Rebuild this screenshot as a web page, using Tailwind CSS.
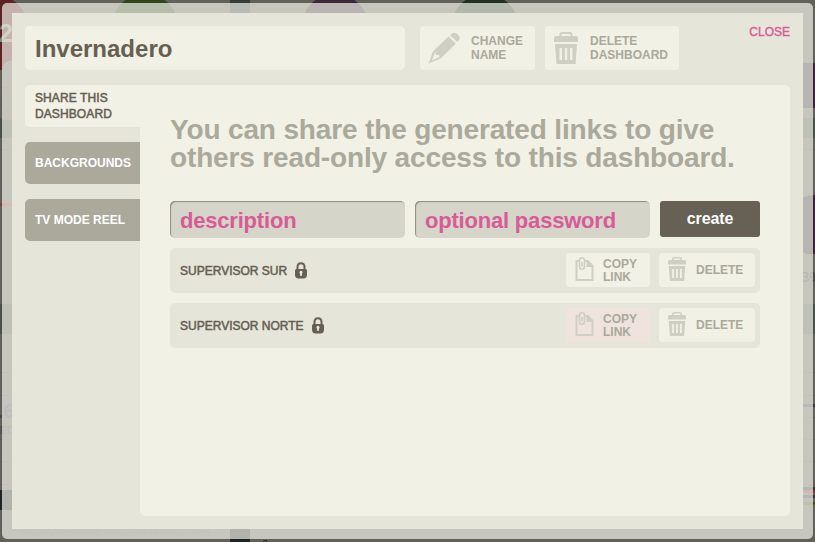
<!DOCTYPE html>
<html lang="en">
<head>
<meta charset="utf-8">
<title>Dashboard settings</title>
<script src="https://cdn.jsdelivr.net/npm/@tailwindcss/browser@4"></script>
</head>
<body class="relative w-[815px] h-[542px] overflow-hidden bg-[#61615a] font-['Liberation_Sans',Arial,sans-serif] text-[#666053]">
<svg class="absolute inset-0" width="815" height="542" aria-hidden="true">
  <g stroke="#595953" stroke-width="1">
    <path d="M0 105.500H815M0 149.500H815M0 372.500H815M0 395.500H815M0 417.500H815M0 439.500H815M0 461.500H815M0 484.500H815"/>
  </g>
  <rect y="118" width="815" height="20" fill="#4a504a"/>
  <rect y="304" width="815" height="30" fill="#4a504a"/>
  <rect y="490" width="240" height="20" fill="#1d2421"/>
  <rect x="230" y="525" width="20" height="17" fill="#1d2421"/>
  <rect x="230" y="0" width="20" height="13" fill="#363d39"/>
  <circle cx="-5" cy="28" r="33" fill="#5a2424"/>
  <rect x="0" y="30" width="13" height="40" fill="#5a2424"/>
  <path d="M2 120V68Q4 61 13 60V120Z" fill="#61615a"/>
  <circle cx="145" cy="28" r="34" fill="#30451f"/>
  <circle cx="335" cy="28" r="34" fill="#38283a"/>
  <circle cx="485" cy="28" r="34" fill="#213021"/>
  <rect x="785" y="63" width="30" height="45" fill="#38283a"/>
  <circle cx="815" cy="225" r="30" fill="#38283a"/>
  <rect x="785" y="254" width="30" height="50" fill="#61615a"/>
  <rect y="203" width="13" height="3" fill="#843f3a"/>
  <rect x="800" y="404" width="15" height="3" fill="#323b4a"/>
  <rect x="800" y="487" width="15" height="3" fill="#30382f"/>
  <rect x="800" y="490" width="15" height="3" fill="#7c3636"/>
  <rect x="800" y="495" width="15" height="3" fill="#38333d"/>
  <rect x="800" y="502" width="15" height="3" fill="#405024"/>
  <g font-weight="700">
    <text x="-1" y="42" font-size="25" fill="#8a8a82">2</text>
    <text x="-2" y="418" font-size="20" fill="#484855">.6</text>
    <text x="0" y="434" font-size="10" fill="#484855">ED</text>
  </g>
  <text x="0" y="95" font-size="10" fill="#7d4d49">TE</text>
  <text x="801" y="282" font-size="15" fill="#30302c">3%</text>
  <text x="20" y="534" font-size="10" textLength="190" fill="#4f5b56">PRESION ATMOSFERICA METEOROLOGIA</text>
  <text x="262" y="549" font-size="12" fill="#292c28">0</text>
</svg>
<svg class="hidden" aria-hidden="true">
  <symbol id="trash" viewBox="0 0 24 32">
    <path fill="none" stroke="currentColor" stroke-width="2" d="M6.500 5V2.500Q6.500 1 8 1H16Q17.500 1 17.500 2.500V5"/>
    <path fill="currentColor" d="M2 4H22Q24 4 24 6V10H0V6Q0 4 2 4Z"/>
    <path fill="currentColor" fill-rule="evenodd" d="M1 12H23L21.500 32H2.500ZM5.500 16V28H8V16ZM10.800 16V28H13.200V16ZM16 16V28H18.500V16Z"/>
  </symbol>
  <symbol id="clip" viewBox="0 0 18 24">
    <path fill="none" stroke="currentColor" stroke-width="2" d="M3.500 4H1V23H17V9L12 4H9.500"/>
    <path fill="currentColor" d="M11 3H12.500L18 8.500V10H11Z"/>
    <path fill="none" stroke="currentColor" stroke-width="1.600" d="M4 3.500V9.500Q4 12.200 6.500 12.200Q9 12.200 9 9.500V3.500Q9 .8 6.500 .8Q4 .8 4 3.500M6.500 5V9.500"/>
  </symbol>
  <symbol id="lock" viewBox="0 0 12 17">
    <path fill="none" stroke="currentColor" stroke-width="2" d="M2.500 8V5Q2.500 1.300 6 1.300Q9.500 1.300 9.500 5V8"/>
    <path fill="currentColor" fill-rule="evenodd" d="M1.500 7H10.500Q12 7 12 8.500V12.500Q12 16.500 8.500 16.500H3.500Q0 16.500 0 12.500V8.500Q0 7 1.500 7ZM6 8.800A1.600 1.600 0 0 0 5.100 11.700L4.900 13.800H7.100L6.900 11.700A1.600 1.600 0 0 0 6 8.800Z"/>
  </symbol>
</svg>

<div class="relative ml-[2px] mt-[3px] w-[811px] h-[536px] rounded-[5px] bg-[#f4f3ea]/69 p-[10px]">
  <main class="w-[791px] h-[516px] bg-[#e5e5da] pl-[13px] pr-[13px] pt-[13px] flex flex-col">
    <header class="flex h-[44px]">
      <h1 class="w-[380px] h-[44px] rounded-[5px] bg-[#f1f1e5] pl-[10px] text-[24px] leading-[46px] font-bold">Invernadero</h1>
      <button class="ml-[15px] w-[115px] h-[44px] rounded-[4px] bg-[#f1f1e5] flex items-center pl-[8px] text-[12px] leading-[14px] font-bold text-left text-[#aaa99b]">
        <svg class="text-[#cfcfc3] w-[32px] h-[32px] mr-[11px] shrink-0" viewBox="0 0 32 32">
          <path fill="currentColor" d="M22 3.200L24 1.500Q27 -.3 30 2.500Q32.500 5.500 31 8L29.300 10Z"/>
          <path fill="currentColor" fill-rule="evenodd" d="M20.500 4.500L27.800 11.800L12.500 26.500L.5 31.500L5 19.500ZM7 20.500L3.800 28.500L11.500 25.300L11 22.800L8.300 23Z"/>
        </svg>
        <span>CHANGE<br>NAME</span>
      </button>
      <button class="ml-[10px] w-[134px] h-[44px] rounded-[4px] bg-[#f1f1e5] flex items-center pl-[9px] text-[12px] leading-[14px] font-bold text-left text-[#aaa99b]">
        <svg class="text-[#cfcfc3] w-[24px] h-[32px] mr-[12px] shrink-0"><use href="#trash"/></svg>
        <span>DELETE<br>DASHBOARD</span>
      </button>
      <a class="ml-auto text-[12px] leading-[14px] h-[14px] mt-[-1px] text-[#d95b96] [-webkit-text-stroke:0.4px_#d95b96]">CLOSE</a>
    </header>
    <div class="mt-[15px] flex h-[431px]">
      <nav class="w-[115px] flex flex-col gap-[15px] text-[12px] leading-[16px]">
        <a class="h-[42px] rounded-l-[5px] bg-[#f1f1e5] pl-[10px] pt-[5px] [-webkit-text-stroke:0.5px_#666053] tracking-[0.1px]">SHARE THIS<br>DASHBOARD</a>
        <a class="h-[42px] rounded-l-[5px] bg-[#aaa99b] pl-[10px] leading-[42px] font-bold text-white">BACKGROUNDS</a>
        <a class="h-[42px] rounded-l-[5px] bg-[#aaa99b] pl-[10px] leading-[42px] font-bold text-white">TV MODE REEL</a>
      </nav>
      <section class="w-[650px] h-[431px] bg-[#f1f1e5] rounded-r-[5px] rounded-bl-[5px] px-[30px] pt-[31px]">
        <p class="h-[85px] text-[28px] leading-[28px] font-bold tracking-[-0.15px] text-[#aaa99b] whitespace-nowrap">You can share the generated links to give<br>others read-only access to this dashboard.</p>
        <div class="flex gap-[10px] h-[37px] text-[22px] leading-[40px] font-bold tracking-[-0.2px] text-[#d95b96]">
          <div class="w-[235px] h-[37px] pl-[10px] rounded-[5px] bg-[#d5d5c9] shadow-[inset_1px_1px_1px_#8d8c7f]">description</div>
          <div class="w-[235px] h-[37px] pl-[10px] rounded-[5px] bg-[#d5d5c9] shadow-[inset_1px_1px_1px_#8d8c7f]">optional password</div>
          <button class="w-[100px] h-[36px] rounded-[3px] bg-[#666154] text-white text-[16px] leading-[34px] tracking-[-0.1px]">create</button>
        </div>
        <ul class="mt-[10px] flex flex-col gap-[10px] text-[12px]">
          <li class="h-[45px] rounded-[5px] bg-[#e5e5da] flex items-center pl-[10px] pr-[5px]">
            <span class="[-webkit-text-stroke:0.5px_#666053]">SUPERVISOR SUR</span>
            <svg class="w-[12px] h-[17px] ml-[8px]"><use href="#lock"/></svg>
            <button class="ml-auto mb-[1px] w-[84px] h-[34px] rounded-[4px] bg-[#f1f1e5] flex items-center pl-[9px] leading-[13px] font-bold text-left text-[#aaa99b]"><svg class="text-[#cfcfc3] w-[19px] h-[24px] mr-[9px] mb-[2px]"><use href="#clip"/></svg><span class="mt-[1px]">COPY<br>LINK</span></button>
            <button class="ml-[9px] mb-[1px] w-[96px] h-[34px] rounded-[4px] bg-[#f1f1e5] flex items-center pl-[9px] font-bold text-[#aaa99b]"><svg class="text-[#cfcfc3] w-[18px] h-[24px] mr-[10px] mb-[2px]"><use href="#trash"/></svg>DELETE</button>
          </li>
          <li class="h-[45px] rounded-[5px] bg-[#e5e5da] flex items-center pl-[10px] pr-[5px]">
            <span class="[-webkit-text-stroke:0.5px_#666053]">SUPERVISOR NORTE</span>
            <svg class="w-[12px] h-[17px] ml-[8px]"><use href="#lock"/></svg>
            <button class="ml-auto mb-[1px] w-[84px] h-[34px] rounded-[4px] bg-[#eee3dd] flex items-center pl-[9px] leading-[13px] font-bold text-left text-[#aaa99b]"><svg class="text-[#cfcfc3] w-[19px] h-[24px] mr-[9px] mb-[2px]"><use href="#clip"/></svg><span class="mt-[1px]">COPY<br>LINK</span></button>
            <button class="ml-[9px] mb-[1px] w-[96px] h-[34px] rounded-[4px] bg-[#f1f1e5] flex items-center pl-[9px] font-bold text-[#aaa99b]"><svg class="text-[#cfcfc3] w-[18px] h-[24px] mr-[10px] mb-[2px]"><use href="#trash"/></svg>DELETE</button>
          </li>
        </ul>
      </section>
    </div>
  </main>
</div>
</body>
</html>
